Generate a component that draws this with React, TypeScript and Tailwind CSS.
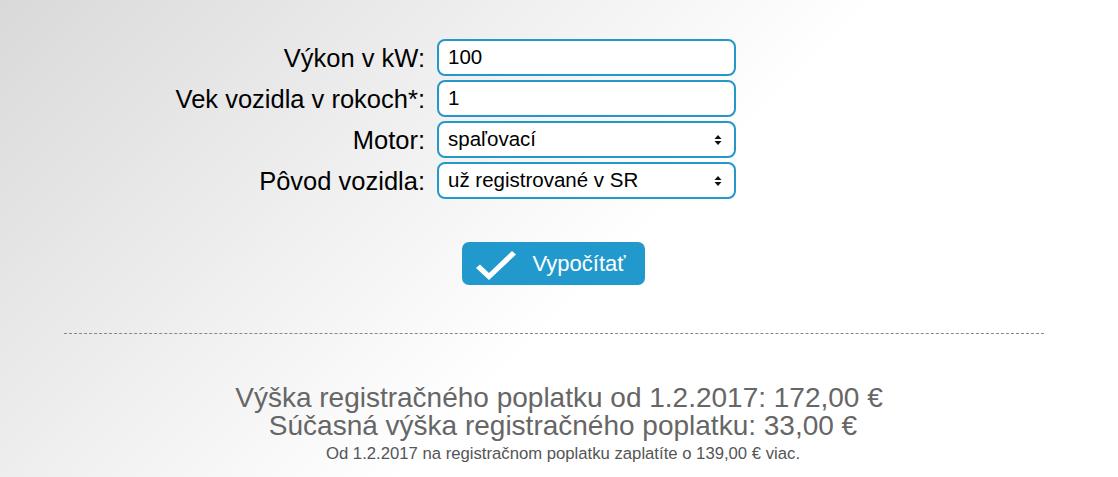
import React from "react";

const Arrows = () => (
  <svg width="8" height="12" viewBox="0 0 8 12" className="absolute right-[12px] top-1/2 -translate-y-1/2">
    <path d="M4 1 L7.5 5 L0.5 5 Z" fill="#111" />
    <path d="M4 11 L7.5 7 L0.5 7 Z" fill="#111" />
  </svg>
);

const Row = ({ label, value, select }: { label: string; value: string; select?: boolean }) => (
  <div className="flex items-center h-[37px]">
    <div className="w-[361px] text-right text-[25.5px] leading-[30px] text-black">{label}</div>
    <div className="relative ml-[12px] w-[299px] h-[37px] rounded-[8px] border-2 border-[#2597c9] bg-white flex items-center pl-[9px] text-[20.5px] text-black">
      {value}
      {select && <Arrows />}
    </div>
  </div>
);

export default function App() {
  return (
    <div
      className="w-[1118px] h-[477px] overflow-hidden bg-[linear-gradient(135deg,#d9d9d9_0%,#ffffff_55%)]"
      style={{ fontFamily: '"Liberation Sans", Arial, sans-serif' }}
    >
      <div className="ml-[64px] w-[980px] pt-[39px]">
        <div className="flex flex-col gap-[4px]">
          <Row label="Výkon v kW:" value="100" />
          <Row label="Vek vozidla v rokoch*:" value="1" />
          <Row label="Motor:" value="spaľovací" select />
          <Row label="Pôvod vozidla:" value="už registrované v SR" select />
        </div>
        <div className="flex justify-center mt-[43px]">
          <div className="ml-[-2px] w-[183px] h-[43px] rounded-[7px] bg-[#2299cc] flex items-center pl-[13px] text-white text-[22px]">
            <svg width="42" height="34" viewBox="0 0 42 34" className="mr-[16px] mt-[3px]">
              <path d="M1 20 L5 16.5 L14 25 L37 3 L41 6.5 L14 32 Z" fill="#fff" />
            </svg>
            <span>Vypočítať</span>
          </div>
        </div>
        <div className="mt-[48px] border-t border-dashed border-[#888]" />
      </div>
      <div className="mt-[50px] text-center text-[#666] text-[28px] leading-[28px]">
        <div>Výška registračného poplatku od 1.2.2017: 172,00 €</div>
        <div className="ml-[8px]">Súčasná výška registračného poplatku: 33,00 €</div>
        <div className="text-[16.7px] leading-[20px] mt-[4px] ml-[8px] text-[#555]">Od 1.2.2017 na registračnom poplatku zaplatíte o 139,00 € viac.</div>
      </div>
    </div>
  );
}
